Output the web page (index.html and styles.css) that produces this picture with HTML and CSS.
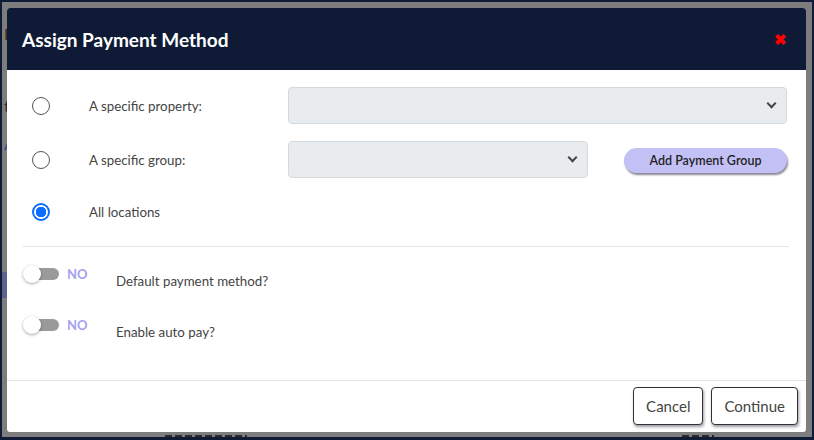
FILE: index.html
```html
<!DOCTYPE html>
<html>
<head>
<meta charset="utf-8">
<link rel="stylesheet" href="styles.css">
</head>
<body>
<div class="screen">
  <div class="page">
    <div class="page-row row-a"><span class="frag frag-e">E</span></div>
    <div class="page-row row-b"><span class="frag">t</span></div>
    <div class="page-row row-c"><span class="frag frag-blue">A</span></div>
    <div class="page-band"></div>
    <div class="page-foot"><span class="foot-mark fm1"></span><span class="foot-mark fm2"></span></div>
  </div>
  <div class="modal">
    <div class="modal-header">
      <h1 class="modal-title">Assign Payment Method</h1>
      <span class="close">&#10006;</span>
    </div>
    <div class="modal-body">
      <div class="opt-row">
        <div class="radio-cell"><input type="radio" name="loc" class="radio"></div>
        <label class="opt-label">A specific property:</label>
        <div class="select select-wide"><span class="chev"></span></div>
      </div>
      <div class="opt-row">
        <div class="radio-cell"><input type="radio" name="loc" class="radio"></div>
        <label class="opt-label">A specific group:</label>
        <div class="select select-half"><span class="chev"></span></div>
        <button class="btn-group">Add Payment Group</button>
      </div>
      <div class="opt-row opt-row-plain">
        <div class="radio-cell"><input type="radio" name="loc" class="radio" checked></div>
        <label class="opt-label">All locations</label>
      </div>
      <hr class="divider">
      <div class="tog-row">
        <div class="toggle"><span class="track"></span><span class="knob"></span></div>
        <span class="no">NO</span>
        <span class="tog-label">Default payment method?</span>
      </div>
      <div class="tog-row">
        <div class="toggle"><span class="track"></span><span class="knob"></span></div>
        <span class="no">NO</span>
        <span class="tog-label">Enable auto pay?</span>
      </div>
    </div>
    <div class="modal-footer">
      <button class="btn">Cancel</button>
      <button class="btn">Continue</button>
    </div>
  </div>
</div>
</body>
</html>
```

FILE: styles.css
```css
* { box-sizing: border-box; }
html, body { margin: 0; padding: 0; }
body {
  background: #101b38;
  font-family: Lato, "Liberation Sans", sans-serif;
  width: 814px;
  height: 440px;
  overflow: hidden;
}
.screen {
  position: relative;
  width: 814px;
  height: 440px;
  padding: 2px 2px 3px 2px;
}
.page {
  height: 435px;
  background: #7d7d7e;
  display: flex;
  flex-direction: column;
}
.page-row { height: 20px; padding-left: 2px; }
.row-a { margin-top: 22px; }
.row-b { margin-top: 52px; }
.row-c { margin-top: 18px; }
.frag { font-size: 16px; color: #2a2a2a; line-height: 20px; }
.frag-e { color: #3a2a1a; }
.frag-blue { color: #3a4a80; }
.page-band {
  margin-top: 118px;
  height: 26px;
  width: 6px;
  background: #5f6290;
}
.page-foot {
  margin-top: auto;
  height: 5px;
  position: relative;
}
.foot-mark {
  position: absolute;
  top: 3px;
  height: 2px;
  background: repeating-linear-gradient(90deg, #2a2a30 0 7px, transparent 7px 10px);
}
.fm1 { left: 163px; width: 82px; }
.fm2 { left: 680px; width: 32px; }

.modal {
  position: absolute;
  top: 8px;
  left: 7px;
  width: 799px;
  height: 424px;
  background: #fff;
  border-radius: 3px;
  overflow: hidden;
  display: flex;
  flex-direction: column;
}
.modal-header {
  height: 62px;
  background: #0f1b36;
  display: flex;
  align-items: center;
  justify-content: space-between;
  padding: 0 19px 0 15px;
}
.modal-title {
  margin: 0;
  font-size: 19px;
  font-weight: 700;
  color: #fff;
}
.close {
  color: #ff0000;
  font-size: 15px;
  font-weight: 700;
  line-height: 1;
  margin-top: 1px;
}
.modal-body {
  height: 311px;
  padding: 17px 19px 0 16px;
  border-bottom: 1px solid #e2e2e2;
}
.opt-row {
  display: flex;
  align-items: center;
  height: 37px;
  margin-bottom: 17px;
}
.opt-row-plain {
  height: 34px;
  margin-bottom: 0;
}
.radio-cell { width: 66px; padding-left: 9px; display: flex; }
.radio {
  appearance: none;
  -webkit-appearance: none;
  width: 18px;
  height: 18px;
  margin: 0;
  border: 1px solid #555;
  border-radius: 50%;
  background: #fff;
}
.radio:checked {
  border: 2px solid #0d6efd;
  background: radial-gradient(circle, #0d6efd 0 5px, #fff 5.5px);
}
.opt-label {
  width: 199px;
  font-size: 13.3px;
  color: #444;
}
.select {
  height: 37px;
  background: #e9ecef;
  border: 1px solid #d6d9dc;
  border-radius: 4px;
  position: relative;
}
.select-wide { flex: 1; }
.select-half { width: 300px; }
.chev {
  position: absolute;
  right: 11px;
  top: 12px;
  width: 7px;
  height: 7px;
  border-right: 2px solid #444;
  border-bottom: 2px solid #444;
  transform: rotate(45deg);
}
.btn-group {
  margin-left: auto;
  width: 163px;
  height: 25px;
  border: none;
  border-radius: 13px;
  background: #c3c0f6;
  color: #222;
  font-family: inherit;
  font-size: 12.5px;
  font-weight: 600;
  box-shadow: 1px 2px 2px rgba(40, 40, 60, 0.55);
  margin-top: 1px;
}
.divider {
  margin: 17px 0 0 0;
  width: calc(100% + 2px);
  border: none;
  border-top: 1px solid #e4e4e4;
}
.tog-row {
  display: flex;
  align-items: flex-start;
  height: 51px;
}
.divider + .tog-row { margin-top: 18px; }
.toggle {
  position: relative;
  width: 36px;
  height: 18px;
}
.track {
  position: absolute;
  left: 2px;
  top: 3px;
  width: 34px;
  height: 12px;
  border-radius: 6px;
  background: #9a9a9a;
}
.knob {
  position: absolute;
  left: 0;
  top: 0;
  width: 18px;
  height: 18px;
  border-radius: 50%;
  background: #fff;
  box-shadow: 0 1px 3px rgba(0,0,0,0.35);
}
.no {
  margin-left: 8px;
  font-size: 13px;
  font-weight: 700;
  color: #a59ff0;
  line-height: 18px;
  width: 49px;
}
.tog-label {
  font-size: 13.3px;
  color: #444;
  padding-top: 7px;
  line-height: 18px;
}
.modal-footer {
  flex: 1;
  display: flex;
  justify-content: flex-end;
  align-items: flex-start;
  gap: 8px;
  padding: 6px 8px 0 0;
}
.btn {
  height: 38px;
  padding: 0 12px;
  background: #fff;
  border: 1px solid #333;
  border-radius: 4px;
  font-family: inherit;
  font-size: 15px;
  color: #444;
  box-shadow: 1px 2px 3px rgba(30, 30, 60, 0.45);
}
```
